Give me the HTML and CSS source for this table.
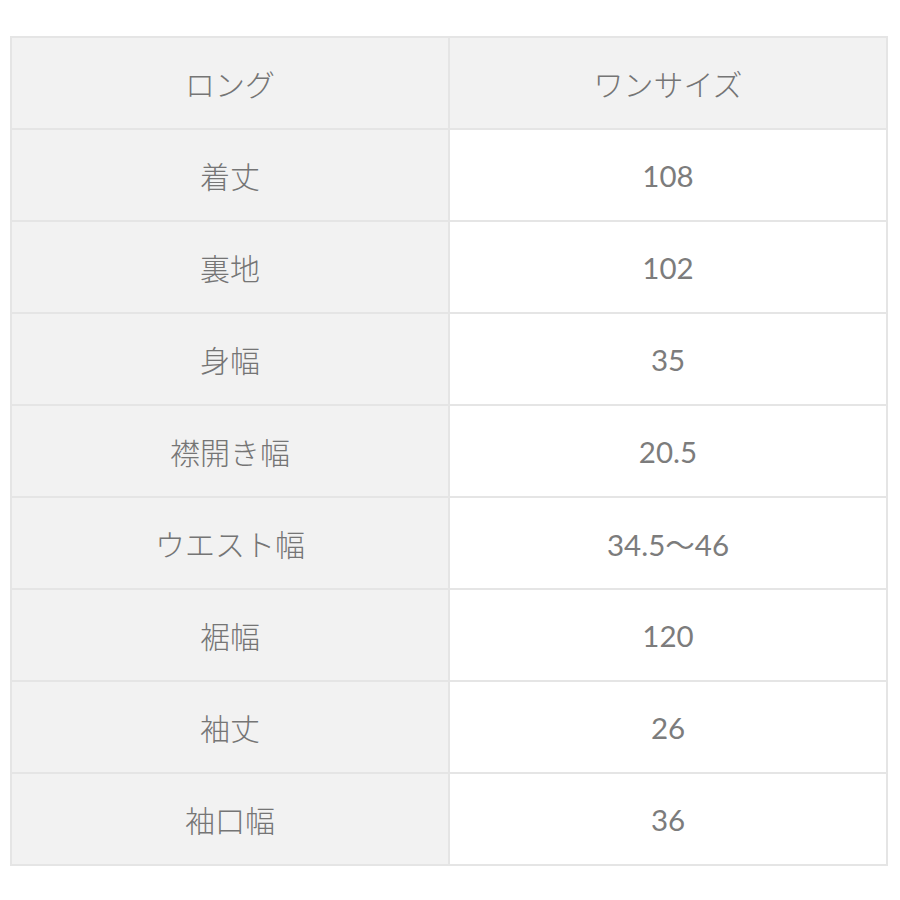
FILE: index.html
```html
<!DOCTYPE html>
<html lang="ja">
<head>
<meta charset="utf-8">
<link rel="stylesheet" href="styles.css">
</head>
<body>
<table class="size-table">
  <tr class="head"><th>ロング</th><th>ワンサイズ</th></tr>
  <tr><th>着丈</th><td>108</td></tr>
  <tr><th>裏地</th><td>102</td></tr>
  <tr><th>身幅</th><td>35</td></tr>
  <tr><th>襟開き幅</th><td>20.5</td></tr>
  <tr><th>ウエスト幅</th><td>34.5～46</td></tr>
  <tr><th>裾幅</th><td>120</td></tr>
  <tr><th>袖丈</th><td>26</td></tr>
  <tr><th>袖口幅</th><td>36</td></tr>
</table>
</body>
</html>
```
FILE: styles.css
```css
html, body {
  margin: 0;
  padding: 0;
  background: #fff;
}
body {
  padding: 36px 0 0 10px;
}
.size-table {
  border-collapse: collapse;
  width: 878px;
  font-family: Lato, "Noto Sans CJK JP", sans-serif;
  font-size: 30px;
  color: #757575;
}
.size-table th,
.size-table td {
  border: 2px solid #e5e5e5;
  height: 90px;
  padding: 0;
  text-align: center;
  vertical-align: middle;
  width: 50%;
}
.size-table th {
  background: #f2f2f2;
  font-weight: 300;
}
.size-table td {
  background: #fff;
  font-weight: 400;
  font-size: 29.5px;
  color: #7c7c7c;
}
.size-table .head th {
  background: #f2f2f2;
}
```
